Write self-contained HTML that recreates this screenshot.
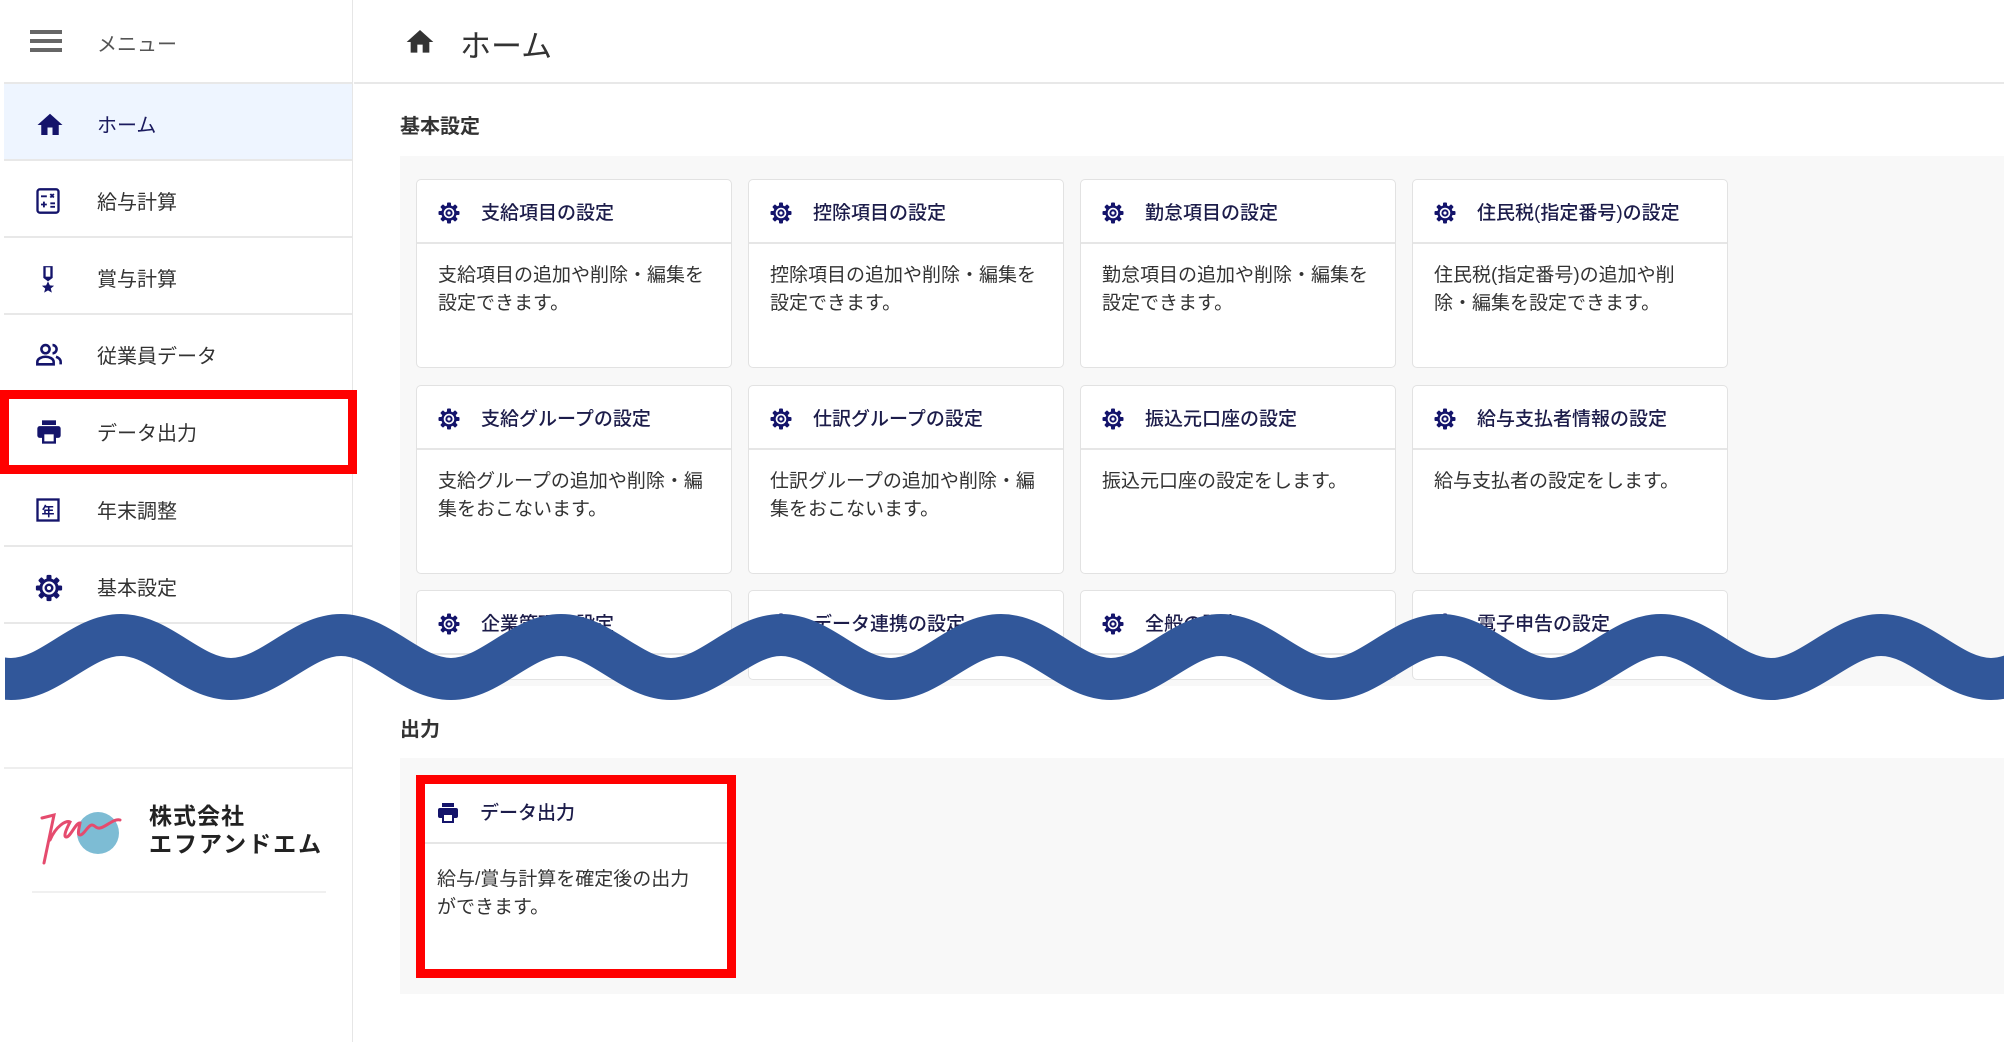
<!DOCTYPE html>
<html><head><meta charset="utf-8"><style>
*{margin:0;padding:0;box-sizing:border-box}
body{width:2004px;height:1042px;position:relative;overflow:hidden;background:#fff;font-family:"Liberation Sans","Noto Sans CJK JP",sans-serif;color:#333}
.abs{position:absolute}
.sb{left:0;top:0;width:353px;height:1042px;border-right:1px solid #e6e6e6}
.item{position:absolute;left:4px;width:348px;height:77px;border-bottom:2px solid #e8e8e8;font-size:20px;line-height:84px;padding-left:93px;overflow:hidden}
.item svg{position:absolute;left:30px;top:26px}
.card{position:absolute;width:316px;height:189px;background:#fff;border:1px solid #e2e2e2;border-radius:5px}
.card .h{height:64px;border-bottom:2px solid #e6e6e6;font-size:19px;line-height:68px;padding-left:64px;color:#1c1c4a;position:relative;font-weight:500;overflow:hidden}
.card .h svg{position:absolute;left:20px;top:21px}
.card .b{padding:18px 20px 0 21px;font-size:19px;line-height:28px;color:#333}
</style></head><body>
<svg width="0" height="0" style="position:absolute"><defs>
<g id="gear"><circle cx="12" cy="12" r="6.5" fill="none" stroke="#14146b" stroke-width="2.4"/><circle cx="12" cy="12" r="2.6" fill="none" stroke="#14146b" stroke-width="2"/>
<g fill="#14146b"><rect x="10" y="1.5" width="4" height="5" rx="1"/><rect x="10" y="17.5" width="4" height="5" rx="1"/><rect x="1.5" y="10" width="5" height="4" rx="1"/><rect x="17.5" y="10" width="5" height="4" rx="1"/>
<rect x="10" y="1.5" width="4" height="5" rx="1" transform="rotate(45 12 12)"/><rect x="10" y="17.5" width="4" height="5" rx="1" transform="rotate(45 12 12)"/><rect x="1.5" y="10" width="5" height="4" rx="1" transform="rotate(45 12 12)"/><rect x="17.5" y="10" width="5" height="4" rx="1" transform="rotate(45 12 12)"/></g></g>
<g id="printer" fill="#14146b"><rect x="6" y="2" width="12" height="4"/><rect x="2" y="7" width="20" height="10" rx="2"/><rect x="6" y="13" width="12" height="9" fill="#14146b"/><rect x="8" y="14" width="8" height="6" fill="#fff"/></g>
</defs></svg>

<div class="abs sb">
  <div class="abs" style="left:4px;top:0;width:348px;height:84px;border-bottom:2px solid #e8e8e8"></div>
  <div class="abs" style="left:30px;top:30px;width:32px;height:4px;background:#666;box-shadow:0 9px 0 #666,0 18px 0 #666"></div>
  <div class="abs" style="left:97px;top:28px;font-size:20px;color:#555">メニュー</div>

  <div class="item" style="top:84px;background:#eef5ff;color:#1a1a5e"><svg width="32" height="30" viewBox="0 0 24 24"><path d="M10 20v-6h4v6h5v-8h3L12 3 2 12h3v8z" fill="#14146b"/></svg>ホーム</div>
  <div class="item" style="top:161px"><svg width="28" height="28" viewBox="0 0 24 24"><rect x="3" y="2" width="18" height="20" rx="2" fill="none" stroke="#14146b" stroke-width="2"/><path d="M6 8h5M14 6l3 3M17 6l-3 3M6 15h5M8.5 12.5v5M14 14h4M14 17h4" stroke="#14146b" stroke-width="1.6"/></svg>給与計算</div>
  <div class="item" style="top:238px"><svg width="28" height="30" viewBox="0 0 24 24"><path d="M8 1h8v10l-4 3-4-3z" fill="#14146b"/><path d="M10 2h4v8h-4z" fill="#fff"/><path d="M12 14l1.6 3.5 3.6.3-2.8 2.3.9 3.6-3.3-2-3.3 2 .9-3.6-2.8-2.3 3.6-.3z" fill="#14146b"/></svg>賞与計算</div>
  <div class="item" style="top:315px"><svg width="30" height="28" viewBox="0 0 24 24"><circle cx="9" cy="7" r="3.5" fill="none" stroke="#14146b" stroke-width="2.2"/><path d="M2 20v-2c0-3 4-4.5 7-4.5s7 1.5 7 4.5v2z" fill="none" stroke="#14146b" stroke-width="2.2"/><path d="M15 3.5a3.5 3.5 0 010 7M18 13.5c2 .7 4 2 4 4.5v2" fill="none" stroke="#14146b" stroke-width="2.2"/></svg>従業員データ</div>
  <div class="item" style="top:392px"><svg width="30" height="28" viewBox="0 0 24 24"><use href="#printer"/></svg>データ出力</div>
  <div class="item" style="top:470px"><svg width="28" height="28" viewBox="0 0 24 24"><rect x="3" y="3" width="18" height="18" fill="none" stroke="#14146b" stroke-width="2"/><text x="12" y="17" font-size="11" text-anchor="middle" fill="#14146b" font-family="Noto Sans CJK JP" font-weight="bold">年</text></svg>年末調整</div>
  <div class="item" style="top:547px"><svg width="30" height="30" viewBox="0 0 24 24"><use href="#gear"/></svg>基本設定</div>

  <div class="abs" style="left:4px;top:767px;width:348px;border-top:2px solid #eee"></div>
  <div class="abs" style="left:32px;top:891px;width:294px;border-top:2px solid #f0f0f0"></div>
  <svg class="abs" style="left:36px;top:800px" width="120" height="70" viewBox="0 0 120 70"><circle cx="62" cy="33" r="21" fill="#7dbcd4"/><path d="M6 18l12-3-10 48M14 40c6-14 16-20 20-18-3 6-7 14-4 15 4 1 10-15 14-14-1 6-3 12 0 12 4 0 8-10 12-10 3 0 4 4 8 3 6-1 14-10 20-8" fill="none" stroke="#e54b6e" stroke-width="3" stroke-linecap="round"/></svg>
  <div class="abs" style="left:149px;top:803px;font-size:23px;font-weight:bold;color:#222;line-height:27px;letter-spacing:1px">株式会社</div>
  <div class="abs" style="left:149px;top:831px;font-size:23px;font-weight:bold;color:#222;line-height:27px;letter-spacing:2px">エフアンドエム</div>
</div>

<div class="abs" style="left:0;top:390px;width:357px;height:84px;border:9px solid #f00"></div>

<div class="abs" style="left:354px;top:0;width:1650px;height:84px;border-bottom:2px solid #e8e8e8"></div>
<svg class="abs" style="left:403px;top:26px" width="34" height="32" viewBox="0 0 24 24"><path d="M10 20v-6h4v6h5v-8h3L12 3 2 12h3v8z" fill="#333"/></svg>
<div class="abs" style="left:460px;top:21px;font-size:31px;color:#333">ホーム</div>

<div class="abs" style="left:400px;top:110px;font-size:20px;font-weight:bold;color:#333">基本設定</div>
<div class="abs" style="left:400px;top:156px;width:1604px;height:530px;background:#f8f8f8"></div>

<div class="card" style="left:416px;top:179px"><div class="h"><svg width="24" height="24" viewBox="0 0 24 24"><use href="#gear"/></svg>支給項目の設定</div><div class="b">支給項目の追加や削除・編集を設定できます。</div></div>
<div class="card" style="left:748px;top:179px"><div class="h"><svg width="24" height="24" viewBox="0 0 24 24"><use href="#gear"/></svg>控除項目の設定</div><div class="b">控除項目の追加や削除・編集を設定できます。</div></div>
<div class="card" style="left:1080px;top:179px"><div class="h"><svg width="24" height="24" viewBox="0 0 24 24"><use href="#gear"/></svg>勤怠項目の設定</div><div class="b">勤怠項目の追加や削除・編集を設定できます。</div></div>
<div class="card" style="left:1412px;top:179px"><div class="h"><svg width="24" height="24" viewBox="0 0 24 24"><use href="#gear"/></svg>住民税(指定番号)の設定</div><div class="b">住民税(指定番号)の追加や削<br>除・編集を設定できます。</div></div>

<div class="card" style="left:416px;top:385px"><div class="h"><svg width="24" height="24" viewBox="0 0 24 24"><use href="#gear"/></svg>支給グループの設定</div><div class="b">支給グループの追加や削除・編<br>集をおこないます。</div></div>
<div class="card" style="left:748px;top:385px"><div class="h"><svg width="24" height="24" viewBox="0 0 24 24"><use href="#gear"/></svg>仕訳グループの設定</div><div class="b">仕訳グループの追加や削除・編<br>集をおこないます。</div></div>
<div class="card" style="left:1080px;top:385px"><div class="h"><svg width="24" height="24" viewBox="0 0 24 24"><use href="#gear"/></svg>振込元口座の設定</div><div class="b">振込元口座の設定をします。</div></div>
<div class="card" style="left:1412px;top:385px"><div class="h"><svg width="24" height="24" viewBox="0 0 24 24"><use href="#gear"/></svg>給与支払者情報の設定</div><div class="b">給与支払者の設定をします。</div></div>

<div class="card" style="left:416px;top:590px;height:90px"><div class="h"><svg width="24" height="24" viewBox="0 0 24 24"><use href="#gear"/></svg>企業管理の設定</div></div>
<div class="card" style="left:748px;top:590px;height:90px"><div class="h"><svg width="24" height="24" viewBox="0 0 24 24"><use href="#gear"/></svg>データ連携の設定</div></div>
<div class="card" style="left:1080px;top:590px;height:90px"><div class="h"><svg width="24" height="24" viewBox="0 0 24 24"><use href="#gear"/></svg>全般の設定</div></div>
<div class="card" style="left:1412px;top:590px;height:90px"><div class="h"><svg width="24" height="24" viewBox="0 0 24 24"><use href="#gear"/></svg>電子申告の設定</div></div>

<svg class="abs" style="left:5px;top:560px" width="1999" height="200" viewBox="5 560 1999 200">
<path d="M-209 679 C-169 679 -139 635 -99 635 C-59 635 -29 679 11 679 C51 679 81 635 121 635 C161 635 191 679 231 679 C271 679 301 635 341 635 C381 635 411 679 451 679 C491 679 521 635 561 635 C601 635 631 679 671 679 C711 679 741 635 781 635 C821 635 851 679 891 679 C931 679 961 635 1001 635 C1041 635 1071 679 1111 679 C1151 679 1181 635 1221 635 C1261 635 1291 679 1331 679 C1371 679 1401 635 1441 635 C1481 635 1511 679 1551 679 C1591 679 1621 635 1661 635 C1701 635 1731 679 1771 679 C1811 679 1841 635 1881 635 C1921 635 1951 679 1991 679 C2031 679 2061 635 2101 635" fill="none" stroke="#31579a" stroke-width="42"/>
</svg>

<div class="abs" style="left:400px;top:713px;font-size:20px;font-weight:bold;color:#333">出力</div>
<div class="abs" style="left:400px;top:758px;width:1604px;height:236px;background:#f8f8f8"></div>
<div class="card" style="left:420px;top:780px;width:310px;height:194px;border:none"><div class="h" style="padding-left:60px"><svg width="24" height="24" viewBox="0 0 24 24" style="left:16px"><use href="#printer"/></svg>データ出力</div><div class="b" style="padding-left:17px;padding-top:22px">給与/賞与計算を確定後の出力<br>ができます。</div></div>
<div class="abs" style="left:416px;top:775px;width:320px;height:203px;border:9px solid #f00"></div>
</body></html>
